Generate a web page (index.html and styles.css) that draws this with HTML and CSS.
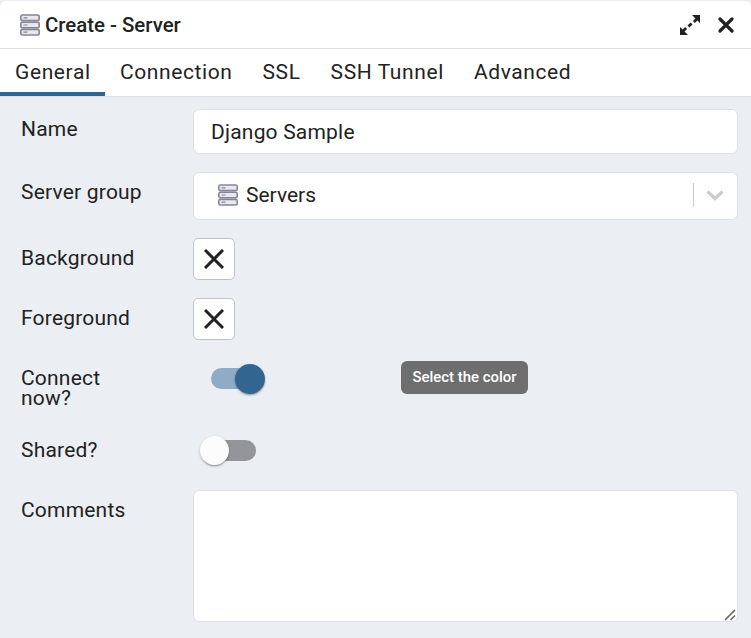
FILE: index.html
```html
<!DOCTYPE html>
<html lang="en">
<head>
    <meta charset="UTF-8">
    <meta name="viewport" content="width=device-width, initial-scale=1.0">
    <title>Create - Server</title>
    <link rel="stylesheet" href="styles.css">
</head>
<body>

<div class="dialog">
    <div class="header">
        <svg class="server-icon" viewBox="0 0 20 22" width="20" height="22">
            <g fill="#e8e8ee" stroke="#85858f" stroke-width="1.6">
                <rect x="0.8" y="1" width="18.4" height="5.6" rx="1.6"/>
                <rect x="0.8" y="8.2" width="18.4" height="5.6" rx="1.6"/>
                <rect x="0.8" y="15.4" width="18.4" height="5.6" rx="1.6"/>
            </g>
            <path d="M3.5 3.8h4M3.5 11h4M3.5 18.2h4" stroke="#85858f" stroke-width="1.2"/>
        </svg>
        <span class="title">Create - Server</span>
        <svg class="head-btn expand" viewBox="0 0 20 20" width="20" height="20">
            <path d="M12 0h8v8l-2.6-2.6-2.6 2.6-1.9-1.9L15.500 3.500zM8 20H0v-8l2.600 2.600 2.600-2.600 1.900 1.900L4.500 16.500zM7.500 10.600l3.100-3.100 1.900 1.900-3.100 3.100z" fill="#222"/>
        </svg>
        <svg class="head-btn close" viewBox="0 0 16 16" width="16" height="16">
            <path d="M2 2l12 12M14 2L2 14" stroke="#222" stroke-width="3.2" stroke-linecap="round"/>
        </svg>
    </div>

    <div class="tabs">
        <div class="tab active">General</div>
        <div class="tab">Connection</div>
        <div class="tab">SSL</div>
        <div class="tab">SSH Tunnel</div>
        <div class="tab">Advanced</div>
    </div>

    <div class="form">
        <div class="row">
            <label class="label">Name</label>
            <div class="input">Django Sample</div>
        </div>
        <div class="row">
            <label class="label">Server group</label>
            <div class="select">
                <svg class="server-icon" viewBox="0 0 20 22" width="20" height="22">
                    <g fill="#e8e8ee" stroke="#85859c" stroke-width="1.6">
                        <rect x="0.8" y="1" width="18.4" height="5.6" rx="1.6"/>
                        <rect x="0.8" y="8.2" width="18.4" height="5.6" rx="1.6"/>
                        <rect x="0.8" y="15.4" width="18.4" height="5.6" rx="1.6"/>
                    </g>
                    <path d="M3.5 3.8h4M3.5 11h4M3.5 18.2h4" stroke="#85859c" stroke-width="1.2"/>
                </svg>
                <span class="select-value">Servers</span>
                <span class="select-sep"></span>
                <svg class="chevron" viewBox="0 0 20 12" width="20" height="12">
                    <path d="M2.5 2.5L10 9.5l7.5-7" fill="none" stroke="#ccc" stroke-width="3.2"/>
                </svg>
            </div>
        </div>
        <div class="row">
            <label class="label">Background</label>
            <div class="color-btn">
                <svg viewBox="0 0 20 20" width="20" height="20"><path d="M1 1l18 18M19 1L1 19" stroke="#222" stroke-width="3"/></svg>
            </div>
        </div>
        <div class="row">
            <label class="label">Foreground</label>
            <div class="color-btn">
                <svg viewBox="0 0 20 20" width="20" height="20"><path d="M1 1l18 18M19 1L1 19" stroke="#222" stroke-width="3"/></svg>
            </div>
        </div>
        <div class="row row-connect">
            <label class="label label-narrow">Connect now?</label>
            <div class="switch on"><span class="track"></span><span class="thumb"></span></div>
            <div class="tooltip">Select the color</div>
        </div>
        <div class="row row-shared">
            <label class="label">Shared?</label>
            <div class="switch"><span class="track"></span><span class="thumb"></span></div>
        </div>
        <div class="row">
            <label class="label">Comments</label>
            <div class="textarea">
                <svg class="resizer" viewBox="0 0 12 12" width="12" height="12">
                    <path d="M1 11L11 1M6.5 11L11 6.5" stroke="#666" stroke-width="1.6"/>
                </svg>
            </div>
        </div>
    </div>
</div>

</body>
</html>
```

FILE: styles.css
```css
* {
    box-sizing: border-box;
}
html, body {
    margin: 0;
    height: 100%;
}
body {
    font-family: 'Roboto', sans-serif;
    color: #222;
    background: #ebeef3;
}
.dialog {
    height: 638px;
    display: flex;
    flex-direction: column;
    position: relative;
    overflow: hidden;
}
.header {
    height: 48px;
    flex: none;
    margin-top: 1px;
    padding: 0 17px 0 20px;
    display: flex;
    align-items: center;
    background: #fff;
    border-bottom: 1px solid #dde0e6;
    border-radius: 6px 6px 0 0;
}
.title {
    margin-left: 5px;
    font-size: 20.4px;
    font-weight: 500;
    flex: 1;
}
.head-btn.expand {
    margin-right: 18px;
}
.tabs {
    height: 48px;
    flex: none;
    display: flex;
    background: #fff;
    border-bottom: 1px solid #dde0e6;
}
.tab {
    padding: 10px 15px 0;
    font-size: 21px;
    letter-spacing: 0.6px;
    line-height: 26px;
}
.tab.active {
    border-bottom: 4px solid #326690;
    width: 105px;
    height: 47px;
}
.form {
    padding: 12px 13px 0 21px;
    display: flex;
    flex-direction: column;
    gap: 18px;
}
.row {
    display: flex;
    align-items: flex-start;
}
.label {
    width: 172px;
    flex: none;
    padding-top: 10px;
    font-size: 21px;
    line-height: 20px;
    letter-spacing: 0.2px;
}
.label-narrow {
    width: 172px;
    padding-right: 80px;
}
.input, .select, .textarea {
    flex: 1;
    background: #fff;
    border: 1px solid #dde0e6;
    border-radius: 6px;
}
.input {
    height: 45px;
    padding: 0 17px;
    display: flex;
    align-items: center;
    font-size: 21px;
    letter-spacing: 0.2px;
}
.select {
    height: 48px;
    padding: 0 12px 2px 24px;
    display: flex;
    align-items: center;
    font-size: 21px;
}
.select-value {
    margin-left: 8px;
    flex: 1;
}
.select-sep {
    width: 1px;
    height: 24px;
    background: #ccc;
}
.chevron {
    margin-left: 11px;
}
.color-btn {
    width: 42px;
    height: 42px;
    background: #fff;
    border: 1px solid #bfc3cd;
    border-radius: 5px;
    display: flex;
    align-items: center;
    justify-content: center;
}
.row-connect {
    height: 59px;
    position: relative;
}
.row-connect .label {
    padding-top: 10px;
}
.row-shared {
    height: 37px;
}
.row-shared .label {
    padding-top: 5px;
}
.switch {
    position: relative;
    width: 72px;
    height: 30px;
}
.track {
    position: absolute;
    left: 18px;
    top: 4px;
    width: 45px;
    height: 21px;
    border-radius: 11px;
    background: #949599;
}
.thumb {
    position: absolute;
    left: 7px;
    top: 0;
    width: 29px;
    height: 29px;
    border-radius: 50%;
    background: #fcfcfc;
    box-shadow: 0 2px 2px -1px rgba(0, 0, 0, 0.3), 0 1px 3px rgba(0, 0, 0, 0.2);
}
.switch.on .track {
    background: #8fabc6;
}
.switch.on .thumb {
    left: 42px;
    width: 30px;
    height: 30px;
    background: #326690;
}
.row-connect .switch {
    margin-top: 6px;
}
.row-shared .switch {
    margin-top: 1px;
}
.tooltip {
    position: absolute;
    left: 380px;
    top: 3px;
    width: 127px;
    height: 33px;
    border-radius: 6px;
    background: #6e6e6e;
    color: #fff;
    font-size: 14.9px;
    font-weight: 500;
    line-height: 33px;
    text-align: center;
}
.textarea {
    height: 132px;
    position: relative;
}
.resizer {
    position: absolute;
    right: 1px;
    bottom: 0;
}
```
